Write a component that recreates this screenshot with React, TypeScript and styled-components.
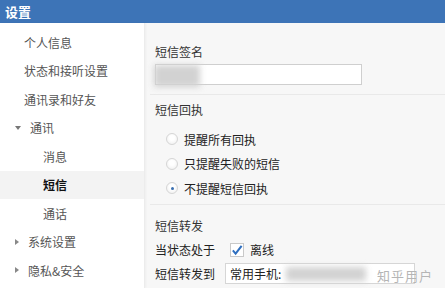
import React from "react";
import styled, { createGlobalStyle } from "styled-components";

const Global = createGlobalStyle`
  html, body { margin: 0; padding: 0; background: #f7f7f7; }
  body { font-family: "Microsoft YaHei", "Noto Sans CJK SC", "Noto Sans", sans-serif; font-size: 12px; }
  * { box-sizing: border-box; }
`;

const Frame = styled.div`
  width: 445px;
  height: 288px;
  overflow: hidden;
  display: flex;
  flex-direction: column;
  background: #f7f7f7;
`;

const Header = styled.div`
  height: 23px;
  flex: none;
  background: #3d74b7;
  color: #fff;
  font-weight: bold;
  font-size: 13px;
  line-height: 23px;
  padding-left: 5px;
`;

const Body = styled.div`
  flex: 1;
  display: flex;
  min-height: 0;
`;

const Sidebar = styled.div`
  width: 145px;
  flex: none;
  background: #fff;
  padding-top: 5px;
  border-right: 1px solid #ececec;
  box-shadow: 1px 0 2px rgba(0, 0, 0, 0.04);
`;

const NavItem = styled.div<{ $indent: number; $active?: boolean }>`
  height: 28.5px;
  display: flex;
  align-items: center;
  padding-left: ${(p) => p.$indent}px;
  color: ${(p) => (p.$active ? "#111" : "#555")};
  font-weight: ${(p) => (p.$active ? "bold" : "normal")};
  background: ${(p) => (p.$active ? "#f3f3f3" : "transparent")};
`;

const Caret = styled.span<{ $open?: boolean }>`
  width: 0;
  height: 0;
  margin-right: 9px;
  margin-left: -2px;
  border-style: solid;
  ${(p) =>
    p.$open
      ? `border-width: 4px 3px 0 3px; border-color: #777 transparent transparent transparent;`
      : `border-width: 3px 0 3px 4px; border-color: transparent transparent transparent #888;`}
`;

const Content = styled.div`
  flex: 1;
  padding-left: 5px;
  padding-top: 17px;
  display: flex;
  flex-direction: column;
`;

const Section = styled.div<{ $pb: number; $last?: boolean }>`
  padding-left: 5px;
  padding-bottom: ${(p) => p.$pb}px;
  border-bottom: ${(p) => (p.$last ? "none" : "1px solid #e9e9e9")};
  display: flex;
  flex-direction: column;
`;

const Title = styled.div<{ $mt: number }>`
  color: #333;
  height: 24px;
  line-height: 24px;
  margin-top: ${(p) => p.$mt}px;
`;

const TextBox = styled.div`
  position: relative;
  width: 207px;
  height: 21px;
  background: #fff;
  border: 1px solid #cfcfcf;
`;

const Blur = styled.div<{ $w: number; $l: number }>`
  position: absolute;
  top: 0;
  left: ${(p) => p.$l}px;
  width: ${(p) => p.$w}px;
  height: 22px;
  background: #d2d2d2;
  filter: blur(3px);
`;

const RadioGroup = styled.div`
  margin-top: 5px;
  display: flex;
  flex-direction: column;
`;

const RadioRow = styled.div`
  height: 24.5px;
  display: flex;
  align-items: center;
  padding-left: 11px;
  color: #222;
`;

const RadioCircle = styled.span<{ $on?: boolean }>`
  width: 12px;
  height: 12px;
  border-radius: 50%;
  border: 1px solid #d5d5d5;
  background: radial-gradient(circle at 50% 40%, #fff 30%, #ececec 100%);
  margin-right: 6px;
  display: flex;
  align-items: center;
  justify-content: center;
  &::after {
    content: "";
    width: 3px;
    height: 3px;
    border-radius: 50%;
    background: ${(p) => (p.$on ? "#3a6fb0" : "transparent")};
  }
`;

const FieldRow = styled.div`
  height: 24px;
  display: flex;
  align-items: center;
  color: #222;
`;

const Label = styled.span`
  width: 70px;
`;

const Check = styled.span`
  width: 14px;
  height: 14px;
  border: 1px solid #c9c9c9;
  background: #fff;
  margin-right: 6px;
  margin-left: 5px;
  display: flex;
  align-items: center;
  justify-content: center;
`;

const Select = styled.div`
  position: relative;
  width: 190px;
  height: 21px;
  background: #fff;
  border: 1px solid #d6d6d6;
  display: flex;
  align-items: center;
  padding-left: 4px;
  color: #222;
`;

const Watermark = styled.div`
  position: absolute;
  right: -19px;
  top: 2px;
  color: #b5b5b5;
  font-size: 13px;
  letter-spacing: 1px;
  text-shadow: 0 0 1px #fff;
`;

const nav: { label: string; indent: number; caret?: "open" | "closed"; active?: boolean }[] = [
  { label: "个人信息", indent: 24 },
  { label: "状态和接听设置", indent: 24 },
  { label: "通讯录和好友", indent: 24 },
  { label: "通讯", indent: 17, caret: "open" },
  { label: "消息", indent: 43 },
  { label: "短信", indent: 43, active: true },
  { label: "通话", indent: 43 },
  { label: "系统设置", indent: 17, caret: "closed" },
  { label: "隐私&安全", indent: 17, caret: "closed" },
];

export default function App() {
  return (
    <Frame>
      <Global />
      <Header>设置</Header>
      <Body>
        <Sidebar>
          {nav.map((n) => (
            <NavItem key={n.label} $indent={n.indent} $active={n.active}>
              {n.caret && <Caret $open={n.caret === "open"} />}
              {n.label}
            </NavItem>
          ))}
        </Sidebar>
        <Content>
          <Section $pb={9}>
            <Title $mt={0}>短信签名</Title>
            <TextBox>
              <Blur $l={-2} $w={46} />
            </TextBox>
          </Section>
          <Section $pb={3}>
            <Title $mt={3}>短信回执</Title>
            <RadioGroup>
              <RadioRow>
                <RadioCircle />
                提醒所有回执
              </RadioRow>
              <RadioRow>
                <RadioCircle />
                只提醒失败的短信
              </RadioRow>
              <RadioRow>
                <RadioCircle $on />
                不提醒短信回执
              </RadioRow>
            </RadioGroup>
          </Section>
          <Section $pb={0} $last>
            <Title $mt={9}>短信转发</Title>
            <FieldRow>
              <Label>当状态处于</Label>
              <Check>
                <svg width="13" height="12" viewBox="0 0 13 12">
                  <path d="M2 6.5 L5 10 L11.5 1.5" fill="none" stroke="#2f6fc0" strokeWidth="2.2" />
                </svg>
              </Check>
              离线
            </FieldRow>
            <FieldRow>
              <Label>短信转发到</Label>
              <Select>
                常用手机:
                <Blur $l={60} $w={80} style={{ top: 3, height: 14 }} />
                <Watermark>知乎用户</Watermark>
              </Select>
            </FieldRow>
          </Section>
        </Content>
      </Body>
    </Frame>
  );
}
